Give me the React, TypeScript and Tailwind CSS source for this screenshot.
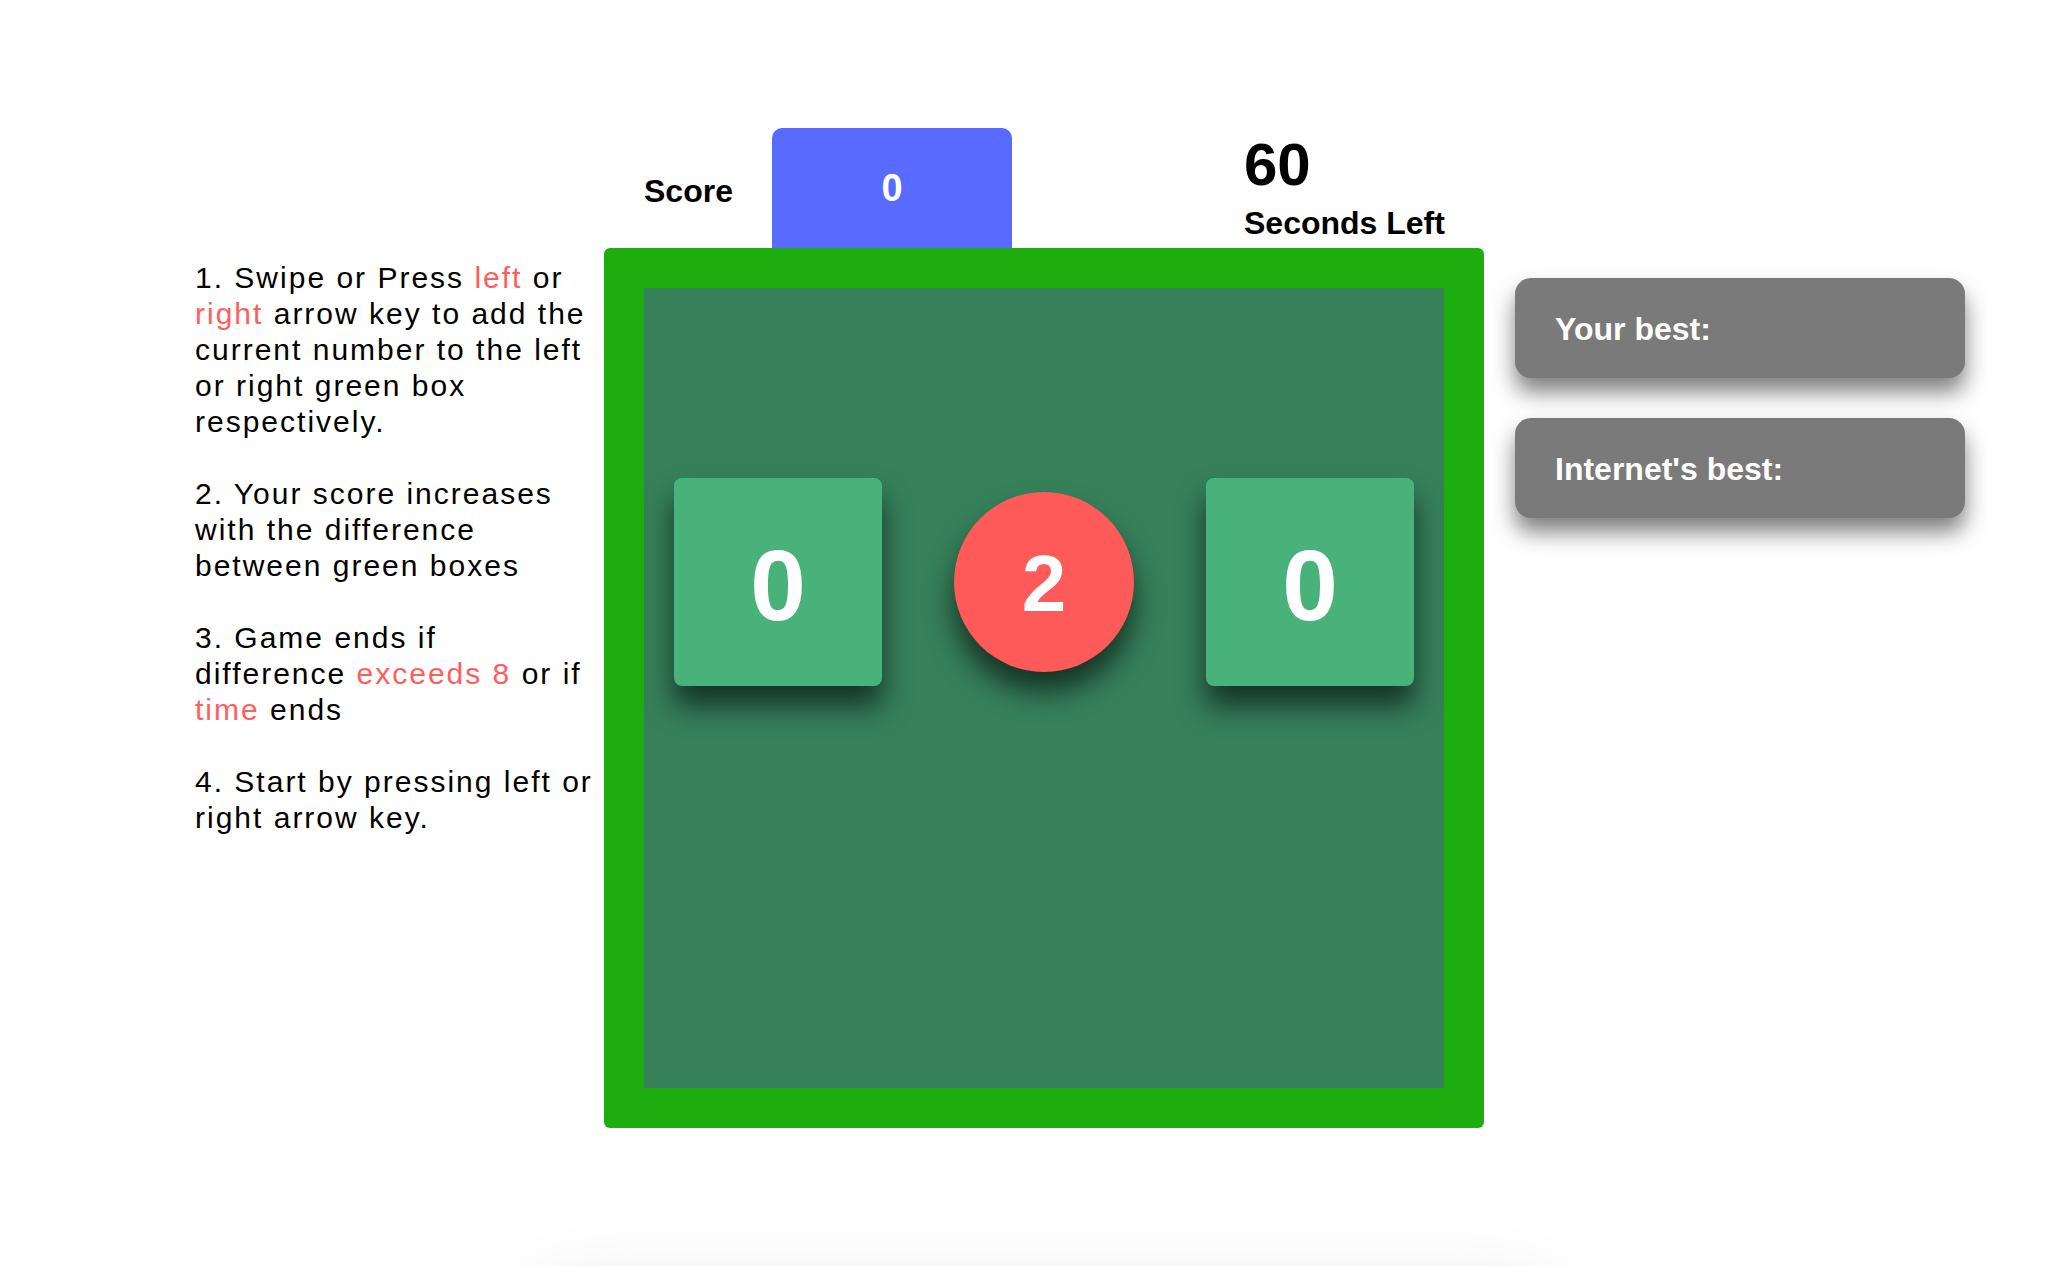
import React from "react";

const red = "text-[#ff5e5e]";

function Instructions() {
  return (
    <div className="w-[399px] shrink-0 mr-[10px] mt-[132px] text-[30px] leading-[36px] tracking-[2px] text-black">
      <p>
        1. Swipe or Press <span className={red}>left</span> or{" "}
        <span className={red}>right</span> arrow key to add the current number to the left or right
        green box respectively.
      </p>
      <p className="mt-[36px]">
        2. Your score increases with the difference between green boxes
      </p>
      <p className="mt-[36px]">
        3. Game ends if difference <span className={red}>exceeds 8</span> or if{" "}
        <span className={red}>time</span> ends
      </p>
      <p className="mt-[36px]">4. Start by pressing left or right arrow key.</p>
    </div>
  );
}

function NumberBox({ value }: { value: number }) {
  return (
    <div className="w-[208px] h-[208px] rounded-[8px] bg-[#48b27a] shadow-[0_20px_28px_rgba(0,0,0,0.6)] flex items-center justify-center pt-[6px]">
      <span className="text-white font-bold text-[100px] leading-none">{value}</span>
    </div>
  );
}

function Board() {
  return (
    <div className="w-[880px] h-[880px] rounded-[6px] bg-[#1ead0e] p-[40px]">
      <div className="w-full h-full bg-[#36805a] pt-[190px] px-[30px]">
        <div className="flex items-center justify-between h-[208px]">
          <NumberBox value={0} />
          <div className="w-[180px] h-[180px] rounded-full bg-[#ff5a5a] shadow-[0_20px_28px_rgba(0,0,0,0.6)] flex items-center justify-center pt-[4px]">
            <span className="text-white font-bold text-[80px] leading-none">2</span>
          </div>
          <NumberBox value={0} />
        </div>
      </div>
    </div>
  );
}

function BestCard({ label }: { label: string }) {
  return (
    <div className="w-[450px] h-[100px] rounded-[16px] bg-[#7a7a7a] shadow-[0_14px_22px_rgba(0,0,0,0.5)] flex items-center pl-[40px] pt-[2px]">
      <span className="text-white font-bold text-[32px] leading-none">{label}</span>
    </div>
  );
}

export default function App() {
  return (
    <div className="min-h-screen bg-white font-['Liberation_Sans',Arial,sans-serif] overflow-hidden">
      <div className="flex pt-[128px] pl-[195px]">
        <Instructions />

        <div className="w-[880px] shrink-0">
          {/* header: score + timer */}
          <div className="flex h-[120px]">
            <div className="w-[168px] shrink-0 pl-[40px] flex items-center pt-[6px]">
              <span className="font-bold text-[32px] leading-none text-black">Score</span>
            </div>
            <div className="w-[240px] shrink-0 h-[120px] rounded-t-[10px] bg-[#586aff] flex items-center justify-center">
              <span className="text-white font-bold text-[38px] leading-none">0</span>
            </div>
            <div className="ml-[232px] flex flex-col justify-end pb-[9px] text-black font-bold">
              <span className="text-[60px] leading-none">60</span>
              <span className="text-[32px] leading-none mt-[12px]">Seconds Left</span>
            </div>
          </div>
          <Board />
        </div>

        <div className="ml-[31px] mt-[150px] flex flex-col gap-[40px]">
          <BestCard label="Your best:" />
          <BestCard label="Internet's best:" />
        </div>
      </div>

      {/* footer card sitting just below the fold */}
      <div className="ml-[544px] mt-[165px] w-[1000px] h-[200px] bg-white shadow-[0_0_80px_rgba(0,0,0,0.12)]" />
    </div>
  );
}
